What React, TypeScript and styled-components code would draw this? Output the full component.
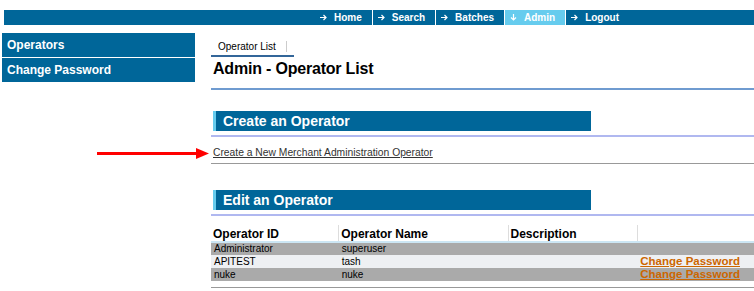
import React from 'react';
import styled, { createGlobalStyle } from 'styled-components';

const GlobalStyle = createGlobalStyle`
  html, body {
    margin: 0;
    padding: 0;
    background: #ffffff;
    font-family: 'Liberation Sans', Arial, sans-serif;
  }
`;

const BLUE = '#006699';
const LIGHT_BLUE = '#66ccee';

const Page = styled.div`
  position: relative;
  width: 754px;
  height: 291px;
  overflow: hidden;
  padding-top: 10px;
  box-sizing: border-box;
`;

const TopBar = styled.nav`
  margin-left: 4px;
  height: 15px;
  background: ${BLUE};
  display: flex;
  justify-content: flex-end;
  padding-right: 125px;
`;

const NavItem = styled.a<{ $active?: boolean }>`
  display: flex;
  align-items: center;
  height: 15px;
  padding: 0 10px 0 5px;
  border-left: 1px solid #ffffff;
  background: ${(p) => (p.$active ? LIGHT_BLUE : 'transparent')};
  color: #ffffff;
  font-size: 10px;
  font-weight: bold;
  text-decoration: none;
  white-space: nowrap;

  &:first-child {
    border-left: none;
  }

  svg {
    margin-right: 7px;
  }
`;

const Body = styled.div`
  display: flex;
  margin-top: 8px;
`;

const Sidebar = styled.ul`
  list-style: none;
  margin: 0 0 0 2px;
  padding: 0;
  width: 193px;
  display: flex;
  flex-direction: column;
  gap: 1px;
`;

const SideItem = styled.li`
  height: 24px;
  background: ${BLUE};
  color: #ffffff;
  font-size: 12px;
  font-weight: bold;
  display: flex;
  align-items: center;
  padding-left: 5px;
`;

const Main = styled.main`
  margin-left: 16px;
  width: 543px;
  display: flex;
  flex-direction: column;
`;

const Tabs = styled.div`
  display: flex;
  margin-top: 5px;
`;

const Tab = styled.div`
  display: flex;
  align-items: center;
  height: 17px;
  padding: 0 7px 0 7px;
  border-bottom: 2px solid #336699;
  font-size: 10px;
  color: #000000;

  span {
    margin-right: 10px;
  }

  i {
    display: block;
    width: 1px;
    height: 11px;
    background: #cccccc;
  }
`;

const Title = styled.h1`
  margin: 3px 0 0 2px;
  font-size: 16px;
  letter-spacing: -0.2px;
  line-height: 18px;
  color: #000000;
`;

const Rule = styled.div<{ $color: string; $size?: number; $gap: number }>`
  margin-top: ${(p) => p.$gap}px;
  height: ${(p) => p.$size ?? 2}px;
  background: ${(p) => p.$color};
`;

const SectionHeader = styled.h2<{ $gap: number }>`
  margin: ${(p) => p.$gap}px 0 0 2px;
  width: 378px;
  height: 20px;
  box-sizing: border-box;
  background: ${BLUE};
  border-left: 3px solid ${LIGHT_BLUE};
  padding-left: 7px;
  display: flex;
  align-items: center;
  font-size: 14px;
  color: #ffffff;
`;

const CreateLink = styled.a`
  margin: 10px 0 0 2px;
  font-size: 10.3px;
  line-height: 12px;
  color: #333333;
  text-decoration: underline;
`;

const Table = styled.table`
  margin-top: 9px;
  width: 543px;
  border-collapse: collapse;
  table-layout: fixed;
`;

const Th = styled.th<{ $w: number }>`
  width: ${(p) => p.$w}px;
  height: 16px;
  padding: 0 0 0 2px;
  text-align: left;
  vertical-align: bottom;
  font-size: 12px;
  line-height: 14px;
  color: #000000;
  border-bottom: 2px solid #cce6f4;
  border-left: 1px solid #dddddd;

  &:first-child {
    border-left: none;
  }
`;

const Row = styled.tr<{ $shade: boolean }>`
  background: ${(p) => (p.$shade ? '#aaaaaa' : '#eef0f3')};
`;

const Td = styled.td`
  height: 12px;
  padding: 0 0 0 3px;
  font-size: 10px;
  line-height: 12px;
  color: #000000;
  white-space: nowrap;
  overflow: hidden;
`;

const PasswordLink = styled.a`
  color: #cc6600;
  font-size: 11.5px;
  font-weight: bold;
  text-decoration: underline;
`;

const Annotation = styled.svg`
  position: absolute;
  left: 97px;
  top: 148px;
`;

const Arrow = ({ down }: { down?: boolean }) => (
  <svg width="7" height="7" viewBox="0 0 7 7">
    {down ? (
      <path d="M3.5 0V6 M1 3.5 L3.5 6 L6 3.5" stroke="#fff" strokeWidth="1.2" fill="none" />
    ) : (
      <path d="M0 3.5H6 M3.5 1 L6 3.5 L3.5 6" stroke="#fff" strokeWidth="1.2" fill="none" />
    )}
  </svg>
);

const navItems = ['Home', 'Search', 'Batches', 'Admin', 'Logout'];

const operators = [
  { id: 'Administrator', name: 'superuser', canChange: false },
  { id: 'APITEST', name: 'tash', canChange: true },
  { id: 'nuke', name: 'nuke', canChange: true },
];

export default function App() {
  return (
    <Page>
      <GlobalStyle />
      <TopBar>
        {navItems.map((item) => (
          <NavItem key={item} $active={item === 'Admin'}>
            <Arrow down={item === 'Admin'} />
            {item}
          </NavItem>
        ))}
      </TopBar>
      <Body>
        <Sidebar>
          <SideItem>Operators</SideItem>
          <SideItem>Change Password</SideItem>
        </Sidebar>
        <Main>
          <Tabs>
            <Tab>
              <span>Operator List</span>
              <i />
            </Tab>
          </Tabs>
          <Title>Admin - Operator List</Title>
          <Rule $color="#6f9bd0" $gap={10} />

          <SectionHeader $gap={21}>Create an Operator</SectionHeader>
          <Rule $color="#b0b8f0" $gap={4} />
          <CreateLink>Create a New Merchant Administration Operator</CreateLink>
          <Rule $color="#999999" $gap={4} $size={1} />

          <SectionHeader $gap={26}>Edit an Operator</SectionHeader>
          <Rule $color="#b0b8f0" $gap={4} />
          <Table>
            <thead>
              <tr>
                <Th $w={125}>Operator ID</Th>
                <Th $w={166}>Operator Name</Th>
                <Th $w={126}>Description</Th>
                <Th $w={114}></Th>
              </tr>
            </thead>
            <tbody>
              {operators.map((op, i) => (
                <Row key={op.id} $shade={i % 2 === 0}>
                  <Td>{op.id}</Td>
                  <Td>{op.name}</Td>
                  <Td></Td>
                  <Td>{op.canChange && <PasswordLink>Change Password</PasswordLink>}</Td>
                </Row>
              ))}
            </tbody>
          </Table>
          <Rule $color="#999999" $gap={6} $size={1} />
        </Main>
      </Body>
      <Annotation width="113" height="11" viewBox="0 0 113 11">
        <rect x="0" y="4" width="100" height="3" fill="#ff0000" />
        <polygon points="99,0 112,5.5 99,11" fill="#ff0000" />
      </Annotation>
    </Page>
  );
}
